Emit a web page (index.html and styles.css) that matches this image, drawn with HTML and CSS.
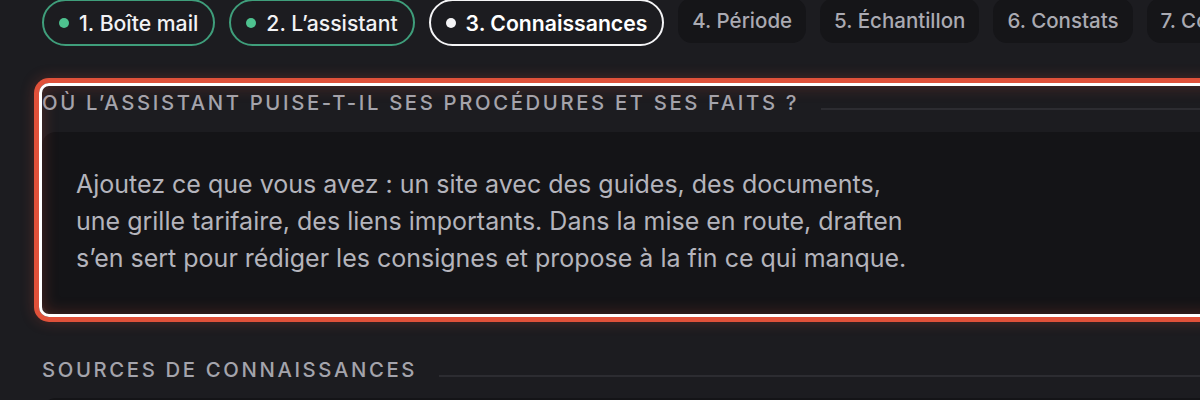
FILE: index.html
```html
<!DOCTYPE html>
<html lang="fr">
<head>
<meta charset="utf-8">
<title>Connaissances</title>
<link rel="stylesheet" href="styles.css">
</head>
<body>
<div class="page">
  <nav class="steps">
    <span class="step step-done"><span class="dot"></span>1. Boîte mail</span>
    <span class="step step-done"><span class="dot"></span>2. L’assistant</span>
    <span class="step step-current"><span class="dot"></span>3. Connaissances</span>
    <span class="step step-todo">4. Période</span>
    <span class="step step-todo">5. Échantillon</span>
    <span class="step step-todo">6. Constats</span>
    <span class="step step-todo">7. Conclusion</span>
  </nav>

  <section class="block block-spot">
    <div class="block-head">
      <h2 class="block-title">Où l’assistant puise-t-il ses procédures et ses faits ?</h2>
      <span class="rule"></span>
    </div>
    <div class="card">
      <p class="card-text">Ajoutez ce que vous avez : un site avec des guides, des documents, une grille tarifaire, des liens importants. Dans la mise en route, draften s’en sert pour rédiger les consignes et propose à la fin ce qui manque.</p>
    </div>
  </section>

  <section class="block block-sources">
    <div class="block-head">
      <h2 class="block-title">Sources de connaissances</h2>
      <span class="rule"></span>
    </div>
    <div class="card card-empty"></div>
  </section>
</div>
</body>
</html>
```

FILE: styles.css
```css
html, body {
  margin: 0;
  padding: 0;
  background: #1c1c20;
  overflow: hidden;
}

body {
  font-family: Inter, "Noto Sans", "Liberation Sans", sans-serif;
  color: #e8e8ec;
}

.page {
  padding-left: 42px;
}

.steps {
  display: flex;
  gap: 14px;
  margin-top: -1px;
  white-space: nowrap;
}

.step {
  flex: none;
  display: inline-flex;
  align-items: center;
  gap: 10px;
  box-sizing: border-box;
  height: 47px;
  padding: 0 15px;
  font-size: 21.2px;
  font-weight: 500;
  border-radius: 24px;
}

.dot {
  width: 10px;
  height: 10px;
  border-radius: 50%;
  flex: none;
}

.step-done {
  border: 2px solid #3f9e7b;
  color: #f2f2f4;
}

.step-done .dot {
  background: #4ec28f;
}

.step-current {
  border: 2px solid #f4f4f6;
  color: #ffffff;
  font-weight: 600;
}

.step-current .dot {
  background: #f4f4f6;
}

.step-todo {
  background: #151518;
  color: #aaaab2;
  font-size: 20.5px;
  padding: 0 14px;
  border-radius: 14px;
  height: 45px;
  margin-top: -1px;
}

.block {
  position: relative;
}

.block-spot {
  margin-top: 40px;
  padding-top: 4px;
}

.block-spot::after {
  content: "";
  position: absolute;
  top: -3px;
  left: -3px;
  bottom: -3px;
  right: -60px;
  border: 3px solid #ffffff;
  border-radius: 10px;
  box-shadow: 0 0 0 5px #e0513a, 0 0 14px 5px rgba(224, 81, 58, 0.25), inset 0 0 16px rgba(224, 81, 58, 0.28);
  pointer-events: none;
}

.block-head {
  display: flex;
  align-items: center;
  gap: 22px;
  height: 26px;
}

.block-title {
  margin: 0;
  flex: none;
  font-size: 20.3px;
  font-weight: 500;
  letter-spacing: 0.13em;
  text-transform: uppercase;
  color: #a4a4ac;
  line-height: 26px;
}

.rule {
  flex: 1;
  height: 2px;
  background: #2c2c31;
  margin-top: 11px;
}

.block-spot .block-head {
  margin-bottom: 16px;
}

.card {
  background: #141417;
  border-radius: 14px;
  padding: 34px 34px 37px;
  margin-right: -60px;
}

.card-text {
  margin: 0;
  max-width: 836px;
  font-size: 25px;
  line-height: 37px;
  color: #b4b4bc;
}

.block-sources {
  margin-top: 43px;
}

.block-sources .block-head {
  margin-bottom: 15px;
}

.card-empty {
  height: 80px;
  padding: 0;
}
```
